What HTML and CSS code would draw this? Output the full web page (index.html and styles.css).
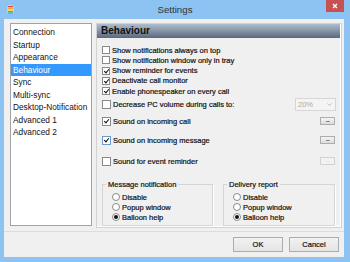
FILE: index.html
```html
<!DOCTYPE html>
<html lang="en">

<head>
    <meta charset="UTF-8">
    <title>Settings</title>
    <link rel="stylesheet" href="styles.css">
</head>

<body>
    <div class="window">
        <!-- Title bar -->
        <div class="titlebar">
            <svg class="app-icon" width="7" height="9" viewBox="0 0 7 9">
                <rect x="0" y="0" width="7" height="9" fill="#e8e8e8" stroke="#8a8a8a" stroke-width="0.6"/>
                <rect x="1" y="1" width="5" height="1.2" fill="#e04040"/>
                <rect x="1" y="2.7" width="5" height="1.2" fill="#f0a020"/>
                <rect x="1" y="4.4" width="5" height="1.2" fill="#e8d020"/>
                <rect x="1" y="6.1" width="5" height="1.2" fill="#40b040"/>
                <rect x="1" y="7.6" width="5" height="0.9" fill="#4080e0"/>
            </svg>
            <span class="title">Settings</span>
            <div class="close">
                <svg width="6" height="6" viewBox="0 0 6 6">
                    <path d="M1 1 L5 5 M5 1 L1 5" stroke="#fff" stroke-width="1.4"/>
                </svg>
            </div>
        </div>

        <div class="client">
            <div class="main">
                <!-- Category list -->
                <ul class="nav">
                    <li>Connection</li>
                    <li>Startup</li>
                    <li>Appearance</li>
                    <li class="selected">Behaviour</li>
                    <li>Sync</li>
                    <li>Multi-sync</li>
                    <li>Desktop-Notification</li>
                    <li>Advanced 1</li>
                    <li>Advanced 2</li>
                </ul>

                <!-- Behaviour page -->
                <div class="panel">
                    <div class="panel-head">Behaviour</div>
                    <div class="options">
                        <div class="row compact"><span class="check small"></span>Show notifications always on top</div>
                        <div class="row compact"><span class="check small"></span>Show notification window only in tray</div>
                        <div class="row compact"><span class="check small on"></span>Show reminder for events</div>
                        <div class="row compact"><span class="check small on"></span>Deactivate call monitor</div>
                        <div class="row compact"><span class="check small on"></span>Enable phonespeaker on every call</div>

                        <div class="row volume">
                            <span class="check"></span>Decrease PC volume during calls to:
                            <div class="combo">
                                <span>20%</span>
                                <svg width="5" height="3" viewBox="0 0 5 3">
                                    <path d="M0.5 0.5 L2.5 2.5 L4.5 0.5" fill="none" stroke="#b0b0b0" stroke-width="0.8"/>
                                </svg>
                            </div>
                        </div>
                        <div class="row sound call">
                            <span class="check on"></span>Sound on incoming call
                            <span class="dots">...</span>
                        </div>
                        <div class="row sound message">
                            <span class="check on hover"></span>Sound on incoming message
                            <span class="dots">...</span>
                        </div>
                        <div class="row sound reminder">
                            <span class="check"></span>Sound for event reminder
                            <span class="dots disabled">...</span>
                        </div>
                    </div>

                    <div class="groups">
                        <fieldset class="group">
                            <legend>Message notification</legend>
                            <div class="radio-row"><span class="radio"></span>Disable</div>
                            <div class="radio-row"><span class="radio"></span>Popup window</div>
                            <div class="radio-row"><span class="radio on"></span>Balloon help</div>
                        </fieldset>
                        <fieldset class="group">
                            <legend>Delivery report</legend>
                            <div class="radio-row"><span class="radio"></span>Disable</div>
                            <div class="radio-row"><span class="radio"></span>Popup window</div>
                            <div class="radio-row"><span class="radio on"></span>Balloon help</div>
                        </fieldset>
                    </div>
                </div>
            </div>

            <div class="footer">
                <button class="btn">OK</button>
                <button class="btn">Cancel</button>
            </div>
        </div>
    </div>
</body>

</html>
```

FILE: styles.css
```css
/* Base */
* {
    box-sizing: border-box;
}

body {
    margin: 0;
    font-family: "Liberation Sans", Arial, sans-serif;
    background: #8cc3f2;
}

.window {
    width: 350px;
    height: 262px;
    background: #8cc3f2;
    display: flex;
    flex-direction: column;
}

/* Title bar */
.titlebar {
    height: 19px;
    display: grid;
    grid-template-columns: 1fr auto 1fr;
    align-items: center;
}

.app-icon {
    margin-left: 7px;
    margin-top: -1px;
}

.title {
    font-size: 9.7px;
    color: #333;
    margin-top: -1px;
}

.close {
    justify-self: end;
    align-self: start;
    width: 18px;
    height: 12px;
    margin-right: 6px;
    background: #c75050;
    display: flex;
    align-items: center;
    justify-content: center;
}

/* Client area */
.client {
    flex: 1;
    margin: 0 6px 5px 4px;
    background: #f0f0f0;
    display: flex;
    flex-direction: column;
}

.main {
    height: 212px;
    padding: 4px 2px 0 6px;
    display: flex;
    gap: 4px;
    align-items: flex-start;
}

/* Category list */
.nav {
    list-style: none;
    margin: 0;
    padding: 2px 0 0 0;
    width: 82px;
    height: 203px;
    background: #fff;
    border: 1px solid #a0a4aa;
    font-size: 8.3px;
    color: #111;
}

.nav li {
    height: 12.5px;
    line-height: 12.5px;
    padding-left: 2px;
    white-space: nowrap;
}

.nav li.selected {
    background: #3399ff;
    color: #fff;
}

/* Page panel */
.panel {
    width: 246px;
    height: 205px;
    border: 1px solid #d2d2d2;
    box-shadow: inset -1px -1px 0 #fff;
    font-size: 7.5px;
    color: #111;
    -webkit-text-stroke: 0.2px #111;
}

.panel-head {
    height: 14px;
    margin-right: 1px;
    line-height: 14px;
    padding-left: 4px;
    font-size: 10px;
    font-weight: bold;
    color: #111;
    -webkit-text-stroke: 0;
    background: linear-gradient(#b0bccb, #8593a7 50%, #5a687e);
}

.options {
    padding: 7px 6px 0 5px;
}

.row {
    display: flex;
    align-items: center;
    white-space: nowrap;
}

.row.compact {
    height: 10.25px;
}

.row.volume {
    height: 13px;
    margin-top: 1.75px;
}

.row.sound {
    height: 12px;
}

.row.call {
    margin-top: 4px;
}

.row.message {
    margin-top: 7px;
}

.row.reminder {
    margin-top: 9px;
}

/* Checkboxes */
.check {
    width: 9px;
    height: 9px;
    margin-right: 2px;
    flex: none;
    background: #fff;
    border: 1px solid #8a8a8a;
    position: relative;
}

.check.small {
    width: 8px;
    height: 8px;
}

.check.on::after {
    content: "";
    position: absolute;
    left: 1.5px;
    top: 0.3px;
    width: 2px;
    height: 4px;
    border: solid #111;
    border-width: 0 1.3px 1.3px 0;
    transform: rotate(40deg);
}

.check.hover {
    border-color: #6a9bcf;
}

/* Volume combo */
.combo {
    margin-left: auto;
    margin-right: -1px;
    width: 41px;
    height: 13px;
    border: 1px solid #d6d6d6;
    background: #f4f4f4;
    display: flex;
    align-items: center;
    justify-content: space-between;
    padding: 0 3px 0 2px;
    color: #a8a8a8;
    -webkit-text-stroke: 0;
}

/* Browse buttons */
.dots {
    margin-left: auto;
    width: 15px;
    height: 8px;
    border: 1px solid #adadad;
    background: linear-gradient(#f4f4f4, #dcdcdc);
    font-size: 6px;
    line-height: 4px;
    text-align: center;
    letter-spacing: -0.5px;
    color: #222;
}

.dots.disabled {
    border-color: #d2d2d2;
    background: #f2f2f2;
    color: #c8c8c8;
    -webkit-text-stroke: 0;
}

/* Radio groups */
.groups {
    display: flex;
    gap: 10px;
    margin: 12.5px 0 0 5px;
}

.group {
    margin: 0;
    padding: 0 0 3px 3px;
    border: 1px solid #d5d5d5;
    box-shadow: 1px 1px 0 #fff;
}

.group:first-child {
    width: 111px;
}

.group:last-child {
    width: 112px;
}

.group legend {
    padding: 0 2px;
    line-height: 9px;
    font-size: 7.5px;
    margin-bottom: 3.5px;
}

.radio-row {
    height: 10px;
    display: flex;
    align-items: center;
    padding-left: 6px;
    white-space: nowrap;
}

.radio {
    width: 8px;
    height: 8px;
    margin-right: 2px;
    border-radius: 50%;
    border: 1px solid #8a8a8a;
    background: #fff;
    display: flex;
    align-items: center;
    justify-content: center;
}

.radio.on::after {
    content: "";
    width: 4px;
    height: 4px;
    border-radius: 50%;
    background: #111;
}

/* Footer buttons */
.footer {
    flex: 1;
    border-top: 1px solid #dcdcdc;
    display: flex;
    justify-content: flex-end;
    align-items: flex-start;
    gap: 6px;
    padding: 5px 5px 0 0;
}

.btn {
    width: 50px;
    height: 15px;
    padding: 0;
    font-family: "Liberation Sans", Arial, sans-serif;
    font-size: 7.5px;
    color: #111;
    -webkit-text-stroke: 0.2px #111;
    border: 1px solid #acacac;
    background: linear-gradient(#f2f2f2, #e4e4e4);
}
```
